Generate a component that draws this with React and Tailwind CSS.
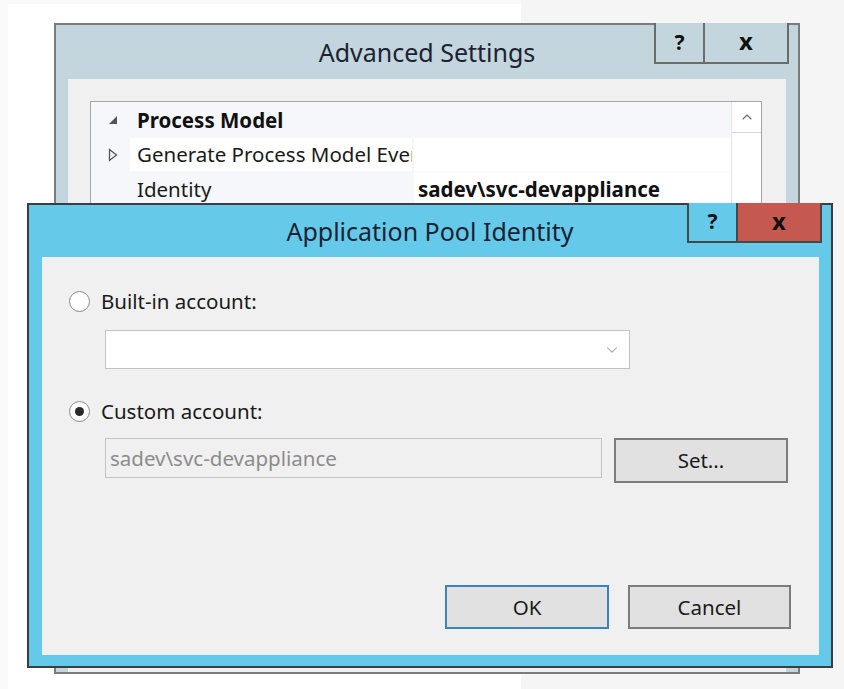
import { ChevronDown, ChevronUp } from 'lucide-react';

const font = { fontFamily: '"Noto Sans", "Open Sans", sans-serif' };

function TitleButtons({ closeClass, frameClass }) {
  return (
    <div className="flex h-full">
      <div className={`w-[51px] h-full flex items-center justify-center border-2 border-t-0 ${frameClass}`}>
        <span className="text-[21px] font-bold text-[#111]">?</span>
      </div>
      <div className={`w-[84px] h-full flex items-center justify-center border-2 border-t-0 border-l-0 ${frameClass} ${closeClass}`}>
        <span className="text-[24px] font-bold leading-none text-[#111] -mt-[3px]">x</span>
      </div>
    </div>
  );
}

function Radio({ checked }) {
  return (
    <div className="w-[21px] h-[21px] rounded-full border-[1.5px] border-[#8a8a8a] bg-white flex items-center justify-center shrink-0">
      {checked && <div className="w-[9px] h-[9px] rounded-full bg-[#2a2a2a]" />}
    </div>
  );
}

function AdvancedSettings() {
  return (
    <div className="absolute left-[54px] top-[23px] w-[746px] h-[651px] border-2 border-[#7b7b7b] bg-[#c3d6dd] flex flex-col">
      <div className="relative h-[54px] shrink-0 flex items-center justify-center">
        <span className="text-[25px] text-[#1c2232] mt-[1px]">Advanced Settings</span>
        <div className="absolute right-[9px] top-[-2px] h-[41px]">
          <TitleButtons frameClass="border-[#6b6b6b] bg-[#c3d6dd]" closeClass="" />
        </div>
      </div>
      <div className="mx-[12px] flex-1 bg-[#f0f0f0] pt-[22px] pl-[22px] pr-[24px]">
        <div className="border border-[#a6a6a6] bg-[#f5f7fb] flex">
          <div className="flex-1 flex flex-col">
            <div className="h-[36px] flex items-center">
              <div className="w-[39px] flex justify-center pl-[4px]">
                <svg width="10" height="10" viewBox="0 0 10 10">
                  <path d="M9 1 L9 9 L1 9 Z" fill="#555" />
                </svg>
              </div>
              <span className="text-[20.5px] font-bold text-[#111] ml-[7px]">Process Model</span>
            </div>
            <div className="h-[33px] flex">
              <div className="w-[39px] flex items-center justify-center pl-[4px]">
                <svg width="10" height="14" viewBox="0 0 10 14">
                  <path d="M1.5 1.5 L8.5 7 L1.5 12.5 Z" fill="none" stroke="#555" strokeWidth="1.3" />
                </svg>
              </div>
              <div className="w-[282px] bg-white flex items-center pl-[7px] overflow-hidden whitespace-nowrap">
                <span className="text-[20.5px] text-[#1a1a1a]">Generate Process Model Ever</span>
              </div>
              <div className="flex-1 bg-white ml-[2px]" />
            </div>
            <div className="h-[34px] flex mt-[1px]">
              <div className="w-[39px]" />
              <div className="w-[282px] flex items-center pl-[7px]">
                <span className="text-[20.5px] text-[#1a1a1a]">Identity</span>
              </div>
              <div className="flex-1 bg-white ml-[2px] flex items-center pl-[4px]">
                <span className="text-[20.5px] font-bold text-[#111]">sadev\svc-devappliance</span>
              </div>
            </div>
          </div>
          <div className="w-[30px] bg-white border-l border-[#e6e6e6] flex flex-col">
            <div className="h-[31px] border-b border-[#d8d8d8] flex items-center justify-center">
              <ChevronUp size={16} strokeWidth={1.6} color="#6a6a6a" />
            </div>
          </div>
        </div>
      </div>
    </div>
  );
}

function ApplicationPoolIdentity() {
  return (
    <div className="absolute left-[27px] top-[203px] w-[806px] h-[465px] border-2 border-[#3d3d3d] bg-[#65c9e9] flex flex-col">
      <div className="relative h-[52px] shrink-0 flex items-center justify-center">
        <span className="text-[25px] text-[#1c2232] mt-[1px]">Application Pool Identity</span>
        <div className="absolute right-[9px] top-[-2px] h-[40px]">
          <TitleButtons frameClass="border-[#474747] bg-[#65c9e9]" closeClass="bg-[#c5594f]" />
        </div>
      </div>
      <div className="ml-[13px] mr-[12px] mb-[11px] flex-1 bg-[#f0f0f0] flex flex-col pl-[27px] pr-[28px] pt-[33px]">
        <div className="flex items-center gap-[11px] h-[22px]">
          <Radio />
          <span className="text-[20.5px] text-[#1a1a1a]">Built-in account:</span>
        </div>
        <div className="ml-[36px] mt-[18px] w-[525px] h-[39px] bg-white border border-[#c3c3c3] flex items-center justify-end pr-[8px]">
          <ChevronDown size={18} strokeWidth={1.4} color="#9a9a9a" />
        </div>
        <div className="flex items-center gap-[11px] h-[22px] mt-[31px]">
          <Radio checked />
          <span className="text-[20.5px] text-[#1a1a1a]">Custom account:</span>
        </div>
        <div className="flex items-start mt-[16px] ml-[36px] gap-[12px]">
          <div className="w-[497px] h-[40px] border border-[#c4c4c4] bg-[#f0f0f0] flex items-center pl-[4px]">
            <span className="text-[20.5px] text-[#8c8c8c]">sadev\svc-devappliance</span>
          </div>
          <button className="w-[174px] h-[45px] border-2 border-[#7c7c7c] bg-[#e1e1e1] text-[20.5px] text-[#1a1a1a]">
            Set...
          </button>
        </div>
        <div className="flex-1" />
        <div className="flex justify-end gap-[19px] mb-[26px]">
          <button className="w-[164px] h-[44px] border-2 border-[#3c82c0] bg-[#e1e1e1] text-[20.5px] text-[#1a1a1a]">
            OK
          </button>
          <button className="w-[163px] h-[44px] border-2 border-[#7c7c7c] bg-[#e1e1e1] text-[20.5px] text-[#1a1a1a]">
            Cancel
          </button>
        </div>
      </div>
    </div>
  );
}

export default function App() {
  return (
    <div className="relative w-[844px] h-[689px] bg-[#fafafa] overflow-hidden" style={font}>
      <div className="flex h-full">
        <div className="ml-[8px] mt-[4px] w-[513px] bg-white" />
        <div className="flex-1 bg-[#f5f5f5]" />
      </div>
      <AdvancedSettings />
      <ApplicationPoolIdentity />
    </div>
  );
}
